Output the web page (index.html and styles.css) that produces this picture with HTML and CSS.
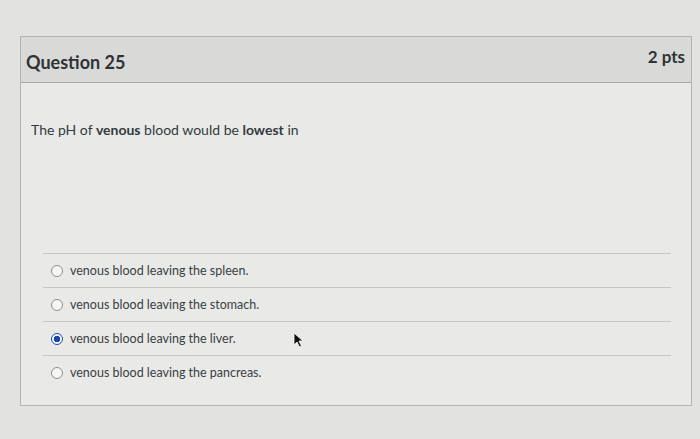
FILE: index.html
```html
<!DOCTYPE html>
<html lang="en">

<head>
    <meta charset="UTF-8">
    <meta name="viewport" content="width=device-width, initial-scale=1.0">
    <title>Question 25</title>

    <link rel="stylesheet" href="styles.css">
</head>

<body>
    <div class="question">
        <header class="question-header">
            <h2>Question 25</h2>
            <span class="points">2 pts</span>
        </header>

        <div class="question-body">
            <p class="question-text">The pH of <b>venous</b> blood would be <b>lowest</b> in</p>

            <!-- Answer choices -->
            <div class="answers">
                <label class="answer">
                    <span class="radio"></span>
                    venous blood leaving the spleen.
                </label>
                <label class="answer">
                    <span class="radio"></span>
                    venous blood leaving the stomach.
                </label>
                <label class="answer selected">
                    <span class="radio"></span>
                    venous blood leaving the liver.
                    <svg class="cursor" width="12" height="16" viewBox="0 0 12 16">
                        <path d="M1 1 L1 13 L4 10 L6.5 15 L8.5 14 L6 9 L10 9 Z" fill="#111" stroke="#fff" stroke-width="0.8"/>
                    </svg>
                </label>
                <label class="answer">
                    <span class="radio"></span>
                    venous blood leaving the pancreas.
                </label>
            </div>
        </div>
    </div>
</body>
</html>
```

FILE: styles.css
```css
* {
    margin: 0;
    padding: 0;
    box-sizing: border-box;
}

body {
    background-color: #e2e3e1;
    font-family: Lato, "Open Sans", sans-serif;
    color: #333a3d;
    padding: 36px 8px 0 20px;
}

.question {
    width: 672px;
    height: 370px;
    border: 1px solid #b3b4b2;
    background-color: #e9eae8;
}

.question-header {
    height: 46px;
    display: flex;
    justify-content: space-between;
    align-items: center;
    padding: 0 6px 0 5px;
    background-color: #d9dad8;
    border-bottom: 1px solid #a8a9a7;
}

.question-header h2 {
    font-size: 18px;
    font-weight: 700;
    color: #2f3335;
    margin-top: 4px;
}

.points {
    font-size: 17px;
    font-weight: 700;
    color: #2f3335;
    margin-top: -6px;
}

.question-body {
    padding: 37px 20px 0 10px;
}

.question-text {
    font-size: 14px;
    line-height: 20px;
}

.question-text b {
    font-weight: 700;
}

.answers {
    margin-top: 113px;
    margin-left: 12px;
}

.answer {
    position: relative;
    display: flex;
    align-items: center;
    gap: 7px;
    height: 34px;
    padding-left: 8px;
    border-top: 1px solid #c6c7c5;
    font-size: 12.5px;
    color: #3a4043;
}

.radio {
    width: 12px;
    height: 12px;
    border-radius: 50%;
    border: 1px solid #8d8f8e;
    background-color: #f6f6f5;
}

.answer.selected .radio {
    border: 1.5px solid #1d4fb8;
    background: radial-gradient(circle, #1a48b0 0 3px, #f6f6f5 3.5px);
}

.cursor {
    position: absolute;
    left: 250px;
    top: 10px;
}
```
